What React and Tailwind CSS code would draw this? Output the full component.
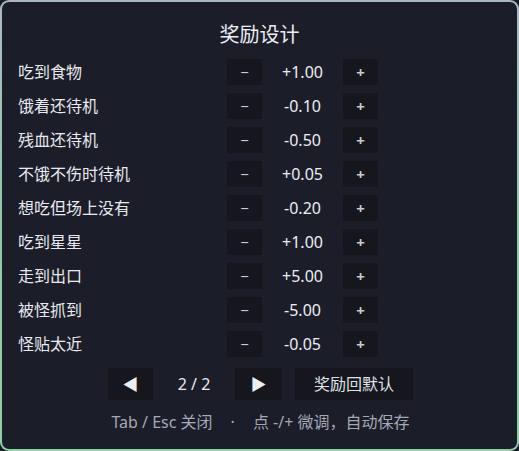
const rows = [
  { label: "吃到食物", value: "+1.00" },
  { label: "饿着还待机", value: "-0.10" },
  { label: "残血还待机", value: "-0.50" },
  { label: "不饿不伤时待机", value: "+0.05" },
  { label: "想吃但场上没有", value: "-0.20" },
  { label: "吃到星星", value: "+1.00" },
  { label: "走到出口", value: "+5.00" },
  { label: "被怪抓到", value: "-5.00" },
  { label: "怪贴太近", value: "-0.05" },
];

const font = { fontFamily: '"Noto Sans", "Noto Sans CJK SC", sans-serif' };

function StepButton({ children }) {
  return (
    <button className="w-[35px] h-[26px] flex items-center justify-center bg-[#16171e] text-[#c9cbd2] text-[15px] leading-none">
      {children}
    </button>
  );
}

export default function App() {
  return (
    <div className="w-[519px] h-[451px] bg-[#1a1c24]" style={font}>
      <div className="w-full h-full rounded-[9px] p-[2px] bg-gradient-to-b from-[#aab8c4] via-[#8fcaa6] to-[#8fd0a8]">
        <div className="w-full h-full rounded-[7px] bg-[#1b1d28] flex flex-col">
          <h1 className="text-center text-[20px] leading-[24px] text-[#eceef2] mt-[21px] mb-[8px]">
            奖励设计
          </h1>

          <div className="flex flex-col">
            {rows.map((r, i) => (
              <div key={i} className="flex items-center h-[34px] pl-[16px]">
                <div className="w-[209px] text-[16px] text-[#e8eaef]">{r.label}</div>
                <StepButton>−</StepButton>
                <div className="w-[81px] text-center text-[16px] text-[#eceef2]">{r.value}</div>
                <StepButton>
                  <span className="font-bold">+</span>
                </StepButton>
              </div>
            ))}
          </div>

          <div className="flex items-center mt-[7px] pl-[106px] h-[32px]">
            <button className="w-[45px] h-[32px] bg-[#16171e] flex items-center justify-center text-[#eceef2] text-[16px]">
              ◀
            </button>
            <div className="w-[82px] text-center text-[16px] text-[#e8eaef]">2 / 2</div>
            <button className="w-[47px] h-[32px] bg-[#16171e] flex items-center justify-center text-[#eceef2] text-[16px]">
              ▶
            </button>
            <button className="ml-[13px] w-[118px] h-[32px] bg-[#16171e] text-[16px] text-[#dfe1e6]">
              奖励回默认
            </button>
          </div>

          <div className="mt-[10px] flex justify-center items-center text-[16px] text-[#a3a9b6] pl-[2px]">
            <span>Tab / Esc 关闭</span>
            <span className="mx-[18px]">·</span>
            <span>点 -/+ 微调，自动保存</span>
          </div>
        </div>
      </div>
    </div>
  );
}
